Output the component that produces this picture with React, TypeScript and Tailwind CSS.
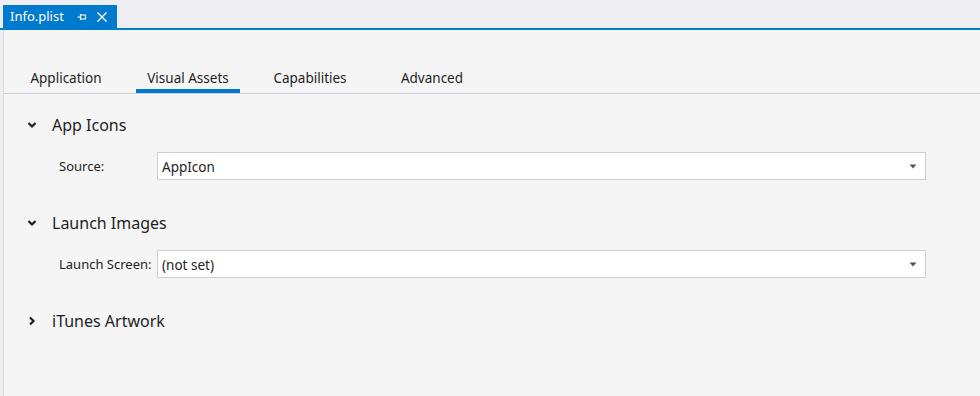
import React from 'react';

const font = { fontFamily: '"Segoe UI", "Noto Sans", "Open Sans", sans-serif' };

const Chevron = ({ open }: { open: boolean }) => (
  <svg width="10" height="10" viewBox="0 0 10 10" className="shrink-0">
    {open ? (
      <path d="M1.5 3 L5 6.5 L8.5 3" fill="none" stroke="#1e1e1e" strokeWidth="2.2" />
    ) : (
      <path d="M3 1.5 L6.5 5 L3 8.5" fill="none" stroke="#1e1e1e" strokeWidth="2.2" />
    )}
  </svg>
);

const Dropdown = ({ value }: { value: string }) => (
  <div className="flex-1 h-[28px] bg-white border border-[#cccedb] flex items-center justify-between pl-[4px] pr-[8px]">
    <span className="text-[13.5px] text-[#1e1e1e] pt-[2px]">{value}</span>
    <svg width="8" height="5" viewBox="0 0 8 5">
      <path d="M0.5 0.5 H7.5 L4 4.5 Z" fill="#555" />
    </svg>
  </div>
);

const Section = ({ title, open, label, value }: { title: string; open: boolean; label?: string; value?: string }) => (
  <div className="flex flex-col">
    <div className="flex items-center h-[22px] pl-[23px] gap-[15px]">
      <Chevron open={open} />
      <span className="text-[16px] text-[#1e1e1e]">{title}</span>
    </div>
    {open && label && (
      <div className="flex items-center mt-[16px] ml-[55px] mr-[54px]">
        <span className="w-[98px] text-[13px] text-[#1e1e1e] pt-[2px]">{label}</span>
        <Dropdown value={value || ''} />
      </div>
    )}
  </div>
);

const App = () => {
  const tabs = ['Application', 'Visual Assets', 'Capabilities', 'Advanced'];
  return (
    <div className="w-[980px] h-[396px] bg-[#eeeef2] flex flex-col overflow-hidden" style={font}>
      <div className="h-[28px] flex items-end pl-[3px]">
        <div className="h-[23px] w-[114px] bg-[#007acc] flex items-center pl-[7px] text-white">
          <span className="text-[13px] leading-none">Info.plist</span>
          <svg width="10" height="10" viewBox="0 0 10 10" className="ml-[13px]">
            <path d="M0.5 5 H3.5 M3.5 2 V8 M3.5 3 H8.5 V7 H3.5" fill="none" stroke="white" strokeWidth="1.2" />
          </svg>
          <svg width="10" height="10" viewBox="0 0 10 10" className="ml-[10px]">
            <path d="M0.5 0.5 L9.5 9.5 M9.5 0.5 L0.5 9.5" stroke="white" strokeWidth="1.4" />
          </svg>
        </div>
      </div>
      <div className="h-[2px] bg-[#007acc]" />
      <div className="flex-1 flex bg-[#f5f5f5]">
        <div className="w-[3px] bg-[#eeeef2]" />
        <div className="w-[1px] bg-[#dcdce0]" />
        <div className="flex-1 flex flex-col">
          <div className="flex items-end h-[64px] border-b border-[#cccedb] pl-[10px] gap-[18px]">
            {tabs.map((t, i) => (
              <div key={t} className="flex flex-col items-center w-[104px]">
                <span className="text-[13.5px] text-[#1e1e1e] leading-[20px] pb-[1px]">{t}</span>
                <div className={`h-[4px] w-full ${i === 1 ? 'bg-[#007acc]' : 'bg-transparent'}`} />
              </div>
            ))}
          </div>
          <div className="flex flex-col pt-[20px]">
            <Section title="App Icons" open label="Source:" value="AppIcon" />
            <div className="h-[32px]" />
            <Section title="Launch Images" open label="Launch Screen:" value="(not set)" />
            <div className="h-[32px]" />
            <Section title="iTunes Artwork" open={false} />
          </div>
        </div>
      </div>
    </div>
  );
};

export default App;
